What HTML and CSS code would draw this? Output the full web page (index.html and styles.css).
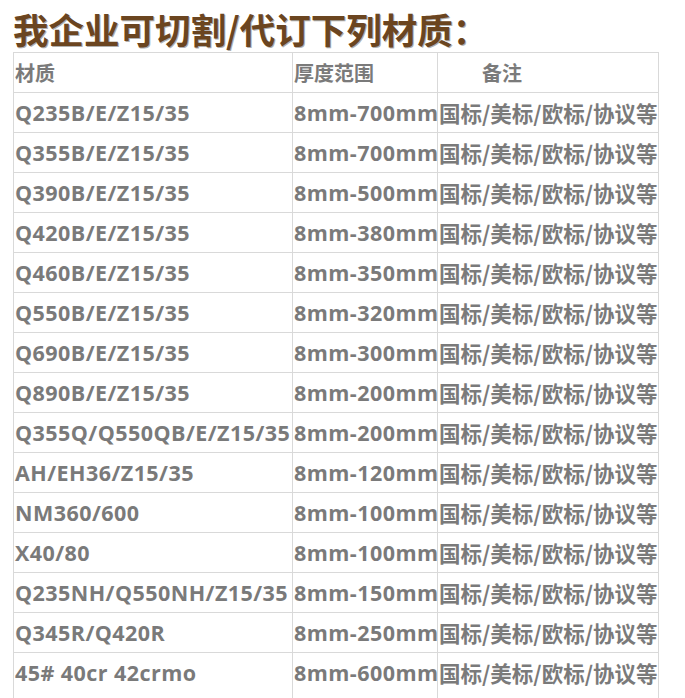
FILE: index.html
```html
<!DOCTYPE html>
<html lang="zh">
<head>
<meta charset="utf-8">
<link rel="stylesheet" href="styles.css">
</head>
<body>
<h1 class="title">我企业可切割/代订下列材质：</h1>
<table class="mat">
<colgroup><col class="w1"><col class="w2"><col class="w3"></colgroup>
<tr class="head"><td>材质</td><td>厚度范围</td><td class="note-h">备注</td></tr>
<tr><td>Q235B/E/Z15/35</td><td>8mm-700mm</td><td>国标/美标/欧标/协议等</td></tr>
<tr><td>Q355B/E/Z15/35</td><td>8mm-700mm</td><td>国标/美标/欧标/协议等</td></tr>
<tr><td>Q390B/E/Z15/35</td><td>8mm-500mm</td><td>国标/美标/欧标/协议等</td></tr>
<tr><td>Q420B/E/Z15/35</td><td>8mm-380mm</td><td>国标/美标/欧标/协议等</td></tr>
<tr><td>Q460B/E/Z15/35</td><td>8mm-350mm</td><td>国标/美标/欧标/协议等</td></tr>
<tr><td>Q550B/E/Z15/35</td><td>8mm-320mm</td><td>国标/美标/欧标/协议等</td></tr>
<tr><td>Q690B/E/Z15/35</td><td>8mm-300mm</td><td>国标/美标/欧标/协议等</td></tr>
<tr><td>Q890B/E/Z15/35</td><td>8mm-200mm</td><td>国标/美标/欧标/协议等</td></tr>
<tr><td>Q355Q/Q550QB/E/Z15/35</td><td>8mm-200mm</td><td>国标/美标/欧标/协议等</td></tr>
<tr><td>AH/EH36/Z15/35</td><td>8mm-120mm</td><td>国标/美标/欧标/协议等</td></tr>
<tr><td>NM360/600</td><td>8mm-100mm</td><td>国标/美标/欧标/协议等</td></tr>
<tr><td>X40/80</td><td>8mm-100mm</td><td>国标/美标/欧标/协议等</td></tr>
<tr><td>Q235NH/Q550NH/Z15/35</td><td>8mm-150mm</td><td>国标/美标/欧标/协议等</td></tr>
<tr><td>Q345R/Q420R</td><td>8mm-250mm</td><td>国标/美标/欧标/协议等</td></tr>
<tr class="last"><td>45# 40cr 42crmo</td><td>8mm-600mm</td><td>国标/美标/欧标/协议等</td></tr>
</table>
</body>
</html>
```
FILE: styles.css
```css
html, body {
  margin: 0;
  padding: 0;
  background: #ffffff;
}
body {
  padding: 0 13px;
  font-family: "Open Sans", "Noto Sans CJK SC", sans-serif;
}
.title {
  margin: 0;
  padding-top: 9px;
  height: 52px;
  box-sizing: border-box;
  font-family: "Noto Sans CJK SC", sans-serif;
  font-size: 35.5px;
  line-height: 40px;
  font-weight: 700;
  color: #6b4520;
  text-shadow: 1px 1px 0 #b0b0b0;
  white-space: nowrap;
}
.mat {
  border-collapse: collapse;
  table-layout: fixed;
  width: 645px;
}
.w1 { width: 279px; }
.w2 { width: 145px; }
.w3 { width: 221px; }
.mat td {
  border: 1px solid #d9d9d9;
  height: 39px;
  padding: 0 0 0 1px;
  font-size: 21.5px;
  letter-spacing: 0.45px;
  font-weight: 700;
  color: #7a7a7a;
  white-space: nowrap;
  overflow: visible;
  vertical-align: middle;
}
.mat td:nth-child(3) {
  font-family: "Noto Sans CJK SC", sans-serif;
  font-size: 21.5px;
  letter-spacing: 0;
}
.mat .head td {
  font-family: "Noto Sans CJK SC", sans-serif;
  font-size: 20px;
  letter-spacing: 0;
}
.mat .head .note-h {
  padding-left: 44px;
}
.mat .last td {
  padding-bottom: 12px;
}
```
